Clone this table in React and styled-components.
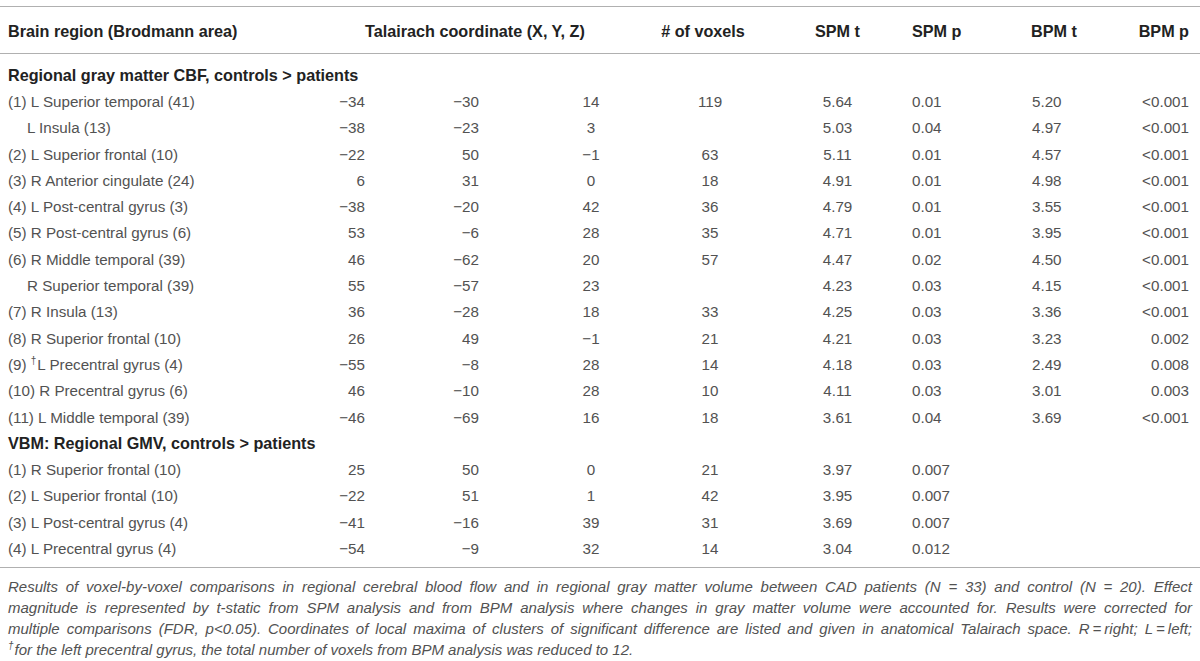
import React from "react";
import styled, { createGlobalStyle } from "styled-components";

const GlobalStyle = createGlobalStyle`
  html, body {
    margin: 0;
    padding: 0;
    background: #fff;
  }
  body {
    font-family: "Liberation Sans", Arial, sans-serif;
    color: #525252;
  }
`;

// column template shared by every row of the table
const COLS = "310px 55px 114px 171px 120px 135px 95px 110px 90px";

// alignment of the data in each column
const colAlign = [
  { align: "left", pl: 8, pr: 0 },
  { align: "right", pl: 0, pr: 0 },
  { align: "right", pl: 0, pr: 0 },
  { align: "center", pl: 53, pr: 0 },
  { align: "center", pl: 0, pr: 0 },
  { align: "center", pl: 0, pr: 0 },
  { align: "left", pl: 7, pr: 0 },
  { align: "left", pl: 32, pr: 0 },
  { align: "right", pl: 0, pr: 11 },
];

const Wrapper = styled.div`
  width: 1200px;
  padding-top: 6px;
`;

const HeadRow = styled.div`
  display: grid;
  grid-template-columns: ${COLS};
  align-items: center;
  height: 48px;
  padding-top: 2px;
  border-top: 1.5px solid #b0b0b0;
  border-bottom: 1.5px solid #b0b0b0;
  box-sizing: border-box;
`;

const HeadCell = styled.div`
  font-weight: 700;
  font-size: 16.2px;
  color: #222;
  white-space: nowrap;
  text-align: ${(p) => p.$align || "left"};
  padding-left: ${(p) => p.$pl || 0}px;
  padding-right: ${(p) => p.$pr || 0}px;
  grid-column: ${(p) => p.$span || "auto"};
`;

const Body = styled.div`
  padding: 8px 0 5px;
  border-bottom: 1.5px solid #b0b0b0;
`;

const Row = styled.div`
  display: grid;
  grid-template-columns: ${COLS};
  align-items: center;
  height: 26.3px;
`;

const SectionTitle = styled.div`
  grid-column: 1 / -1;
  padding-left: 8px;
  font-weight: 700;
  font-size: 16.2px;
  color: #222;
`;

const Cell = styled.div`
  font-size: 15.2px;
  white-space: nowrap;
  text-align: ${(p) => p.$align};
  padding-left: ${(p) => p.$pl}px;
  padding-right: ${(p) => p.$pr}px;
`;

const Region = styled(Cell)`
  padding-left: ${(p) => (p.$indent ? 27 : 8)}px;
`;

const Dagger = styled.sup`
  font-size: 10px;
  line-height: 0;
  margin-right: 1px;
`;

const Caption = styled.div`
  padding: 8px 8px 0 8px;
  font-size: 15px;
  font-style: italic;
  line-height: 21px;
  color: #525252;
`;

const Line = styled.div`
  white-space: nowrap;
  text-align: ${(p) => (p.$last ? "left" : "justify")};
  text-align-last: ${(p) => (p.$last ? "left" : "justify")};
`;

const cbfRows = [
  ["(1) L Superior temporal (41)", "−34", "−30", "14", "119", "5.64", "0.01", "5.20", "<0.001"],
  ["L Insula (13)", "−38", "−23", "3", "", "5.03", "0.04", "4.97", "<0.001", true],
  ["(2) L Superior frontal (10)", "−22", "50", "−1", "63", "5.11", "0.01", "4.57", "<0.001"],
  ["(3) R Anterior cingulate (24)", "6", "31", "0", "18", "4.91", "0.01", "4.98", "<0.001"],
  ["(4) L Post-central gyrus (3)", "−38", "−20", "42", "36", "4.79", "0.01", "3.55", "<0.001"],
  ["(5) R Post-central gyrus (6)", "53", "−6", "28", "35", "4.71", "0.01", "3.95", "<0.001"],
  ["(6) R Middle temporal (39)", "46", "−62", "20", "57", "4.47", "0.02", "4.50", "<0.001"],
  ["R Superior temporal (39)", "55", "−57", "23", "", "4.23", "0.03", "4.15", "<0.001", true],
  ["(7) R Insula (13)", "36", "−28", "18", "33", "4.25", "0.03", "3.36", "<0.001"],
  ["(8) R Superior frontal (10)", "26", "49", "−1", "21", "4.21", "0.03", "3.23", "0.002"],
  ["dagger", "−55", "−8", "28", "14", "4.18", "0.03", "2.49", "0.008"],
  ["(10) R Precentral gyrus (6)", "46", "−10", "28", "10", "4.11", "0.03", "3.01", "0.003"],
  ["(11) L Middle temporal (39)", "−46", "−69", "16", "18", "3.61", "0.04", "3.69", "<0.001"],
];

const vbmRows = [
  ["(1) R Superior frontal (10)", "25", "50", "0", "21", "3.97", "0.007", "", ""],
  ["(2) L Superior frontal (10)", "−22", "51", "1", "42", "3.95", "0.007", "", ""],
  ["(3) L Post-central gyrus (4)", "−41", "−16", "39", "31", "3.69", "0.007", "", ""],
  ["(4) L Precentral gyrus (4)", "−54", "−9", "32", "14", "3.04", "0.012", "", ""],
];

const DataRow = ({ row }) => {
  const [label, ...values] = row.slice(0, 9);
  const indent = row[9];
  return (
    <Row>
      <Region $align="left" $pl={8} $pr={0} $indent={indent}>
        {label === "dagger" ? (
          <>
            (9) <Dagger>†</Dagger>L Precentral gyrus (4)
          </>
        ) : (
          label
        )}
      </Region>
      {values.map((v, i) => {
        const c = colAlign[i + 1];
        return (
          <Cell key={i} $align={c.align} $pl={c.pl} $pr={c.pr}>
            {v}
          </Cell>
        );
      })}
    </Row>
  );
};

const App = () => {
  return (
    <Wrapper>
      <GlobalStyle />
      <HeadRow>
        <HeadCell $pl={8}>Brain region (Brodmann area)</HeadCell>
        <HeadCell $span="2 / 5" $align="center" $pr={10}>
          Talairach coordinate (X, Y, Z)
        </HeadCell>
        <HeadCell $align="center" $pr={14}>
          # of voxels
        </HeadCell>
        <HeadCell $align="center">SPM t</HeadCell>
        <HeadCell $pl={7}>SPM p</HeadCell>
        <HeadCell $pl={31}>BPM t</HeadCell>
        <HeadCell $align="right" $pr={11}>
          BPM p
        </HeadCell>
      </HeadRow>
      <Body>
        <Row>
          <SectionTitle>Regional gray matter CBF, controls &gt; patients</SectionTitle>
        </Row>
        {cbfRows.map((r, i) => (
          <DataRow key={i} row={r} />
        ))}
        <Row>
          <SectionTitle>VBM: Regional GMV, controls &gt; patients</SectionTitle>
        </Row>
        {vbmRows.map((r, i) => (
          <DataRow key={i} row={r} />
        ))}
      </Body>
      <Caption>
        <Line>
          Results of voxel-by-voxel comparisons in regional cerebral blood flow
          and in regional gray matter volume between CAD patients (N = 33) and
          control (N = 20). Effect
        </Line>
        <Line>
          magnitude is represented by t-static from SPM analysis and from BPM
          analysis where changes in gray matter volume were accounted for.
          Results were corrected for
        </Line>
        <Line>
          multiple comparisons (FDR, p&lt;0.05). Coordinates of local maxima of
          clusters of significant difference are listed and given in anatomical
          Talairach space. R{"\u2009"}={"\u2009"}right; L{"\u2009"}={"\u2009"}left;
        </Line>
        <Line $last>
          <Dagger>†</Dagger>for the left precentral gyrus, the total number of
          voxels from BPM analysis was reduced to 12.
        </Line>
      </Caption>
    </Wrapper>
  );
};

export default App;
